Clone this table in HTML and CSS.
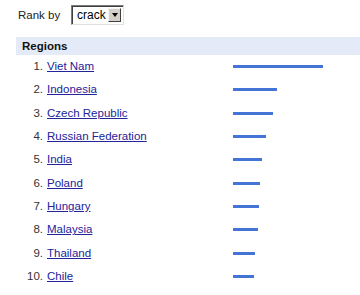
FILE: index.html
```
<!DOCTYPE html>
<html>
<head>
<meta charset="utf-8">
<link rel="stylesheet" href="styles.css">
</head>
<body>
<div class="rankby">
  <span class="label">Rank by</span>
  <div class="select" role="combobox">
    <span class="value">crack</span>
    <span class="btn"><span class="arrow"></span></span>
  </div>
</div>
<div class="header">Regions</div>
<div class="list">
  <div class="row"><span class="num">1.</span><a class="name" href="#">Viet Nam</a><span class="bar" style="width:90px"></span></div>
  <div class="row"><span class="num">2.</span><a class="name" href="#">Indonesia</a><span class="bar" style="width:44px"></span></div>
  <div class="row"><span class="num">3.</span><a class="name" href="#">Czech Republic</a><span class="bar" style="width:40px"></span></div>
  <div class="row"><span class="num">4.</span><a class="name" href="#">Russian Federation</a><span class="bar" style="width:33px"></span></div>
  <div class="row"><span class="num">5.</span><a class="name" href="#">India</a><span class="bar" style="width:29px"></span></div>
  <div class="row"><span class="num">6.</span><a class="name" href="#">Poland</a><span class="bar" style="width:27px"></span></div>
  <div class="row"><span class="num">7.</span><a class="name" href="#">Hungary</a><span class="bar" style="width:26px"></span></div>
  <div class="row"><span class="num">8.</span><a class="name" href="#">Malaysia</a><span class="bar" style="width:25px"></span></div>
  <div class="row"><span class="num">9.</span><a class="name" href="#">Thailand</a><span class="bar" style="width:22px"></span></div>
  <div class="row"><span class="num">10.</span><a class="name" href="#">Chile</a><span class="bar" style="width:21px"></span></div>
</div>
</body>
</html>
```
FILE: styles.css
```
html, body {
  margin: 0;
  padding: 0;
  background: #fff;
  overflow: hidden;
}
body {
  font-family: "Liberation Sans", Arial, sans-serif;
  font-size: 11.5px;
  color: #333;
  width: 360px;
  height: 295px;
}
.rankby {
  display: flex;
  align-items: center;
  height: 20px;
  padding: 5px 0 0 18px;
}
.label {
  color: #222;
  line-height: 20px;
  width: 53px;
}
.select {
  box-sizing: border-box;
  width: 53px;
  height: 20px;
  display: flex;
  align-items: center;
  justify-content: space-between;
  border-top: 1px solid #7a7a7a;
  border-left: 1px solid #7a7a7a;
  border-right: 1px solid #e0e0e0;
  border-bottom: 1px solid #e0e0e0;
  box-shadow: inset 1px 1px 0 #404040;
  padding: 0 2px 0 5px;
  font-size: 12px;
  color: #000;
}
.btn {
  box-sizing: border-box;
  width: 13px;
  height: 14px;
  background: #d4d0c8;
  border-top: 1px solid #f4f4f4;
  border-left: 1px solid #f4f4f4;
  border-right: 1px solid #404040;
  border-bottom: 1px solid #404040;
  display: flex;
  align-items: center;
  justify-content: center;
}
.arrow {
  width: 0;
  height: 0;
  border-left: 3.5px solid transparent;
  border-right: 3.5px solid transparent;
  border-top: 4px solid #000;
}
.header {
  margin: 12px 0 0 16px;
  height: 18px;
  box-sizing: border-box;
  padding: 1px 0 0 6px;
  line-height: 16px;
  background: #e5eaf8;
  font-weight: bold;
  color: #111;
}
.list {
  margin-left: 16px;
}
.row {
  display: grid;
  grid-template-columns: 27px 182px auto;
  column-gap: 4px;
  align-items: center;
  height: 23.33px;
  line-height: 23.33px;
}
.num {
  text-align: right;
  color: #333;
}
.name {
  color: #23239a;
  text-decoration: underline;
  white-space: nowrap;
}
.bar {
  display: block;
  height: 3px;
  background: #4474d6;
}
```
